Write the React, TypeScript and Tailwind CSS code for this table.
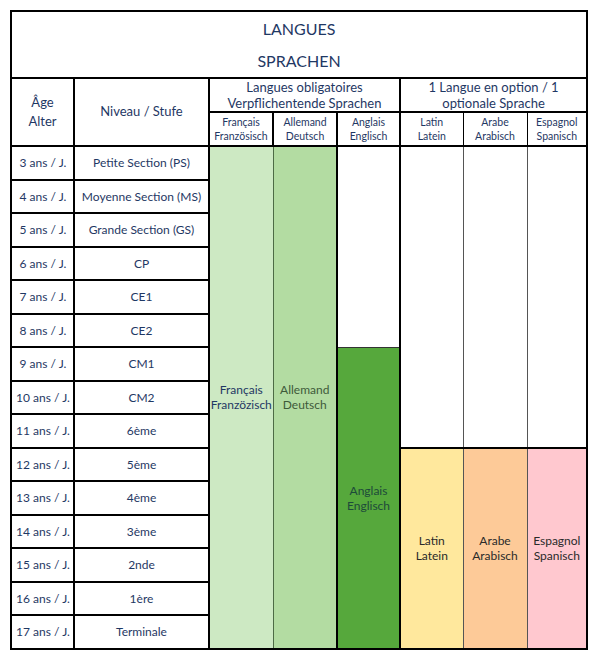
import React from "react";

const rows: [string, string][] = [
  ["3 ans / J.", "Petite Section (PS)"],
  ["4 ans / J.", "Moyenne Section (MS)"],
  ["5 ans / J.", "Grande Section (GS)"],
  ["6 ans / J.", "CP"],
  ["7 ans / J.", "CE1"],
  ["8 ans / J.", "CE2"],
  ["9 ans / J.", "CM1"],
  ["10 ans / J.", "CM2"],
  ["11 ans / J.", "6ème"],
  ["12 ans / J.", "5ème"],
  ["13 ans / J.", "4ème"],
  ["14 ans / J.", "3ème"],
  ["15 ans / J.", "2nde"],
  ["16 ans / J.", "1ère"],
  ["17 ans / J.", "Terminale"],
];

const bodyCell = "border-2 border-black text-center align-middle text-[12px] leading-[15px] text-[#1f3864] p-0";
const subHead = "border-2 border-black text-center align-middle text-[10.5px] leading-[14px] text-[#1f3864] p-0";

export default function App() {
  return (
    <div className="bg-white w-[598px] h-[660px] pl-[10px] pt-[10px]" style={{ fontFamily: "Lato, 'Liberation Sans', sans-serif" }}>
      <table className="border-collapse table-fixed w-[576px] border-2 border-black">
        <colgroup>
          <col className="w-[63px]" />
          <col className="w-[135px]" />
          <col className="w-[64px]" />
          <col className="w-[64px]" />
          <col className="w-[63px]" />
          <col className="w-[63px]" />
          <col className="w-[64px]" />
          <col className="w-[60px]" />
        </colgroup>
        <tbody>
          <tr className="h-[67px]">
            <td colSpan={8} className="border-2 border-black text-center align-middle text-[16px] leading-[32px] text-[#1f3864] p-0">
              <div>LANGUES</div>
              <div>SPRACHEN</div>
            </td>
          </tr>
          <tr className="h-[34px]">
            <td rowSpan={2} className="border-2 border-black text-center align-middle text-[13px] leading-[19px] text-[#1f3864] p-0">
              <div>Âge</div>
              <div>Alter</div>
            </td>
            <td rowSpan={2} className="border-2 border-black text-center align-middle text-[13px] text-[#1f3864] p-0">
              Niveau / Stufe
            </td>
            <td colSpan={3} className="border-2 border-black text-center align-middle text-[13px] leading-[16px] text-[#1f3864] p-0">
              <div>Langues obligatoires</div>
              <div>Verpflichentende Sprachen</div>
            </td>
            <td colSpan={3} className="border-2 border-black text-center align-middle text-[13px] leading-[16px] text-[#1f3864] p-0">
              <div>1 Langue en option / 1</div>
              <div>optionale Sprache</div>
            </td>
          </tr>
          <tr className="h-[34px]">
            <td className={subHead}>
              <div>Français</div>
              <div>Französisch</div>
            </td>
            <td className={subHead}>
              <div>Allemand</div>
              <div>Deutsch</div>
            </td>
            <td className={subHead}>
              <div>Anglais</div>
              <div>Englisch</div>
            </td>
            <td className={subHead + " border-r-[1.5px]"}>
              <div>Latin</div>
              <div>Latein</div>
            </td>
            <td className={subHead + " border-x-[1.5px]"}>
              <div>Arabe</div>
              <div>Arabisch</div>
            </td>
            <td className={subHead + " border-l-[1.5px]"}>
              <div>Espagnol</div>
              <div>Spanisch</div>
            </td>
          </tr>
          {rows.map(([age, level], i) => (
            <tr key={i} className="h-[33.5px]">
              <td className={bodyCell + " pl-[1px]"}>{age}</td>
              <td className={bodyCell}>{level}</td>
              {i === 0 && (
                <>
                  <td rowSpan={15} className="border-y-2 border-l-2 border-r border-black border-r-[#4d6b45] bg-[#cde9c3] text-center align-middle text-[12px] leading-[15px] text-[#1f3864] p-0">
                    <div>Français</div>
                    <div>Franzözisch</div>
                  </td>
                  <td rowSpan={15} className="border-y-2 border-l border-r-2 border-black border-l-[#4d6b45] bg-[#b3dca2] text-center align-middle text-[12px] leading-[15px] text-[#3e5a3a] p-0">
                    <div>Allemand</div>
                    <div>Deutsch</div>
                  </td>
                  <td rowSpan={6} className="border-2 border-black border-b border-b-[#333] p-0" />
                  <td rowSpan={9} className="border-2 border-black border-r border-r-[#555] p-0" />
                  <td rowSpan={9} className="border-2 border-black border-x border-x-[#555] p-0" />
                  <td rowSpan={9} className="border-2 border-black border-l border-l-[#555] p-0" />
                </>
              )}
              {i === 6 && (
                <td rowSpan={9} className="border-2 border-black border-t border-t-[#333] bg-[#56a83c] text-center align-middle text-[12px] leading-[15px] text-[#1d4a3a] p-0">
                  <div>Anglais</div>
                  <div>Englisch</div>
                </td>
              )}
              {i === 9 && (
                <>
                  <td rowSpan={6} className="border-2 border-black border-r border-r-[#555] bg-[#ffe89d] text-center align-middle text-[12px] leading-[15px] text-[#2a2a2a] p-0">
                    <div>Latin</div>
                    <div>Latein</div>
                  </td>
                  <td rowSpan={6} className="border-2 border-black border-x border-x-[#555] bg-[#fdca98] text-center align-middle text-[12px] leading-[15px] text-[#2a2a2a] p-0">
                    <div>Arabe</div>
                    <div>Arabisch</div>
                  </td>
                  <td rowSpan={6} className="border-2 border-black border-l border-l-[#555] bg-[#ffc8cf] text-center align-middle text-[12px] leading-[15px] text-[#2a2a2a] p-0">
                    <div>Espagnol</div>
                    <div>Spanisch</div>
                  </td>
                </>
              )}
            </tr>
          ))}
        </tbody>
      </table>
    </div>
  );
}
